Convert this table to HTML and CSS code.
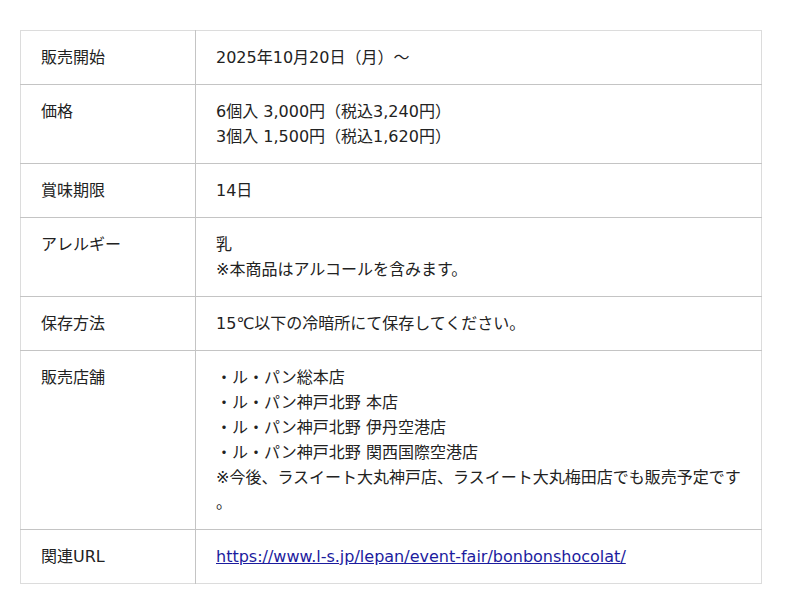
FILE: index.html
```html
<!DOCTYPE html>
<html lang="ja">
<head>
<meta charset="utf-8">
<link rel="stylesheet" href="styles.css">
</head>
<body>
<table class="spec">
  <tr><th>販売開始</th><td>2025年10月20日（月）～</td></tr>
  <tr><th>価格</th><td>6個入 3,000円（税込3,240円）<br>3個入 1,500円（税込1,620円）</td></tr>
  <tr><th>賞味期限</th><td>14日</td></tr>
  <tr><th>アレルギー</th><td>乳<br>※本商品はアルコールを含みます。</td></tr>
  <tr><th>保存方法</th><td>15℃以下の冷暗所にて保存してください。</td></tr>
  <tr><th>販売店舗</th><td>・ル・パン総本店<br>・ル・パン神戸北野 本店<br>・ル・パン神戸北野 伊丹空港店<br>・ル・パン神戸北野 関西国際空港店<br>※今後、ラスイート大丸神戸店、ラスイート大丸梅田店でも販売予定です<br>。</td></tr>
  <tr><th>関連URL</th><td><a class="link" href="#">https://www.l-s.jp/lepan/event-fair/bonbonshocolat/</a></td></tr>
</table>
</body>
</html>
```
FILE: styles.css
```css
html, body {
  margin: 0;
  background: #fff;
}
body {
  padding: 30px 38px 0 20px;
  font-family: "DejaVu Sans", "Noto Sans CJK JP", sans-serif;
  font-size: 16px;
  color: #222;
}
.spec {
  width: 742px;
  border-collapse: collapse;
  border: 1px solid #dcdcdc;
  table-layout: fixed;
}
.spec tr {
  border-bottom: 1px solid #c4c4c4;
}
.spec tr:last-child {
  border-bottom: 1px solid #dcdcdc;
}
.spec th,
.spec td {
  text-align: left;
  vertical-align: top;
  font-weight: normal;
  line-height: 25px;
  padding: 14px 20px 14px 20px;
  white-space: nowrap;
}
.spec th {
  width: 134px;
  border-right: 1px solid #c4c4c4;
}
.link {
  color: #1c1c9e;
  text-decoration: underline;
}
```
